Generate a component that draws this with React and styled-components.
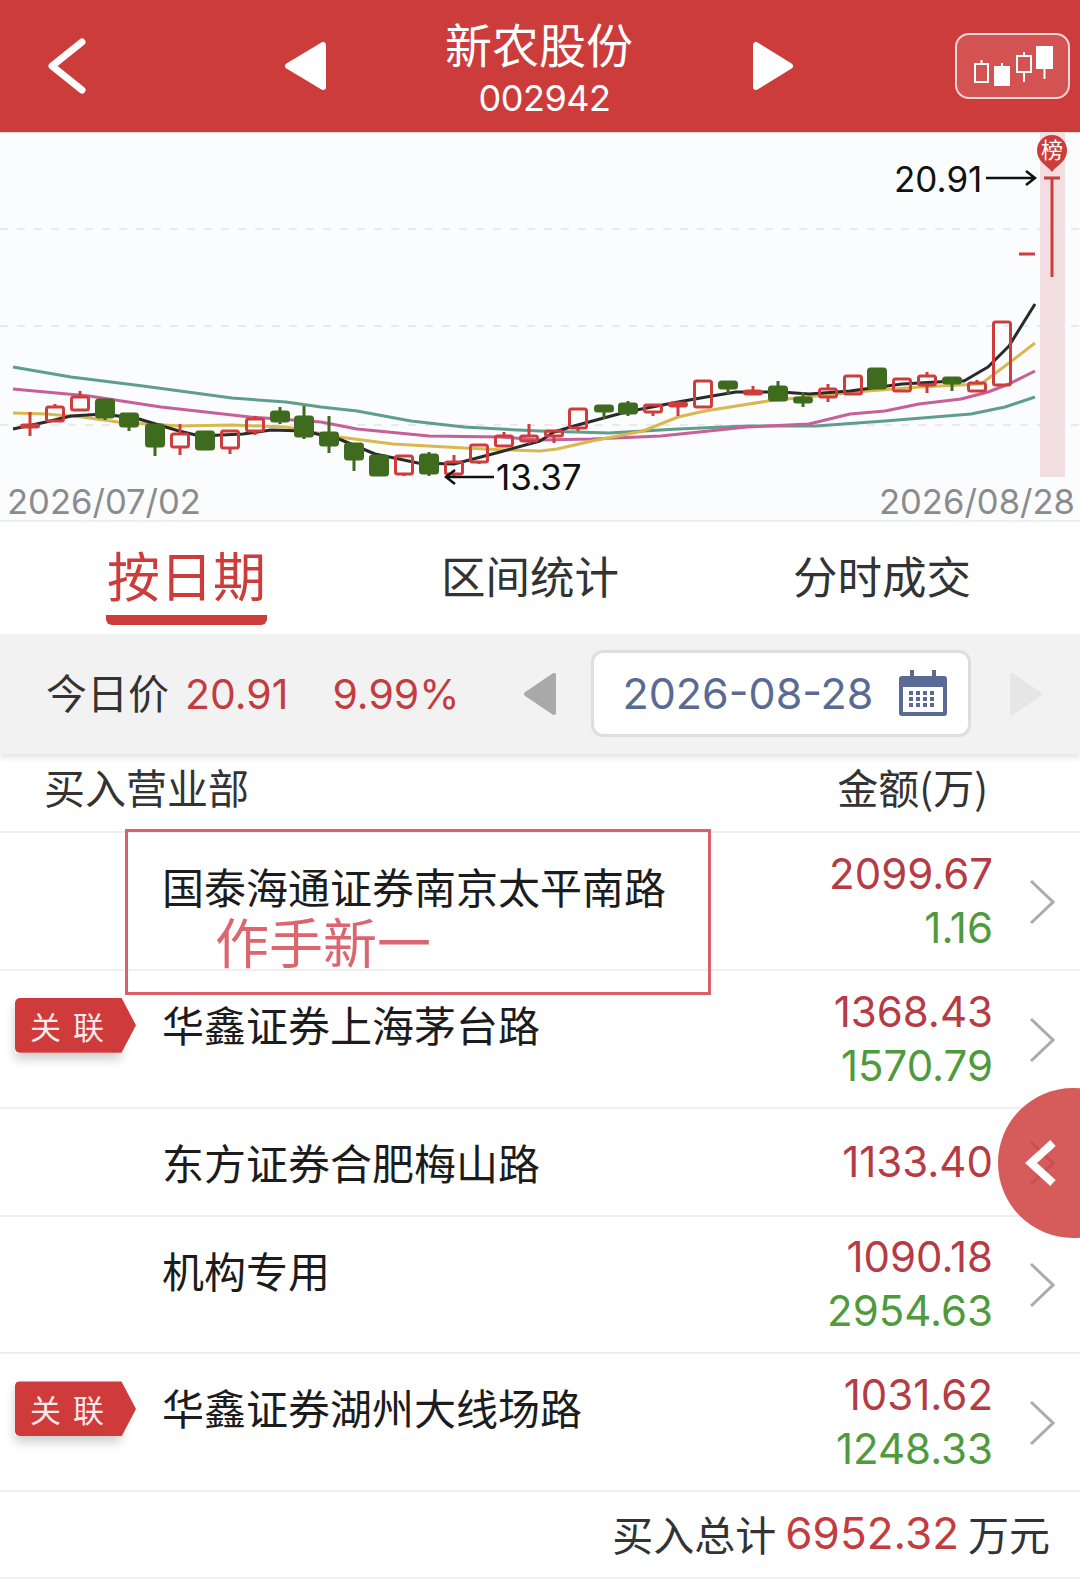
import React from "react";
import styled, { createGlobalStyle } from "styled-components";

const Global = createGlobalStyle`
  html, body { margin: 0; padding: 0; background: #fff; }
  body { font-family: Inter, "Noto Sans CJK SC", sans-serif; }
`;

const Page = styled.div`
  position: relative;
  width: 1080px;
  height: 1580px;
  overflow: hidden;
  background: #fff;
`;

const Header = styled.header`
  display: grid;
  grid-template-columns: 236px 43px 425px 42px 161px 115px;
  align-items: center;
  height: 132px;
  padding-left: 48px;
  background: #cc3c3a;
  color: #fff;
`;

const TitleCol = styled.div`
  display: flex;
  flex-direction: column;
  align-items: center;
`;

const Title = styled.div`
  font-family: "Noto Sans CJK SC", sans-serif;
  font-size: 47px;
  line-height: 58px;
  margin-top: 0;
  margin-left: -1px;
`;

const Code = styled.div`
  font-size: 36px;
  line-height: 40px;
  margin-top: 6px;
  margin-left: 10px;
  letter-spacing: -0.5px;
`;

const KlineBtn = styled.div`
  box-sizing: border-box;
  width: 115px;
  height: 66px;
  border: 2px solid #f3d6d5;
  border-radius: 14px;
  background: rgba(255, 255, 255, 0.12);
`;

const Chart = styled.section`
  height: 390px;
  box-sizing: border-box;
  background: #fbfcfe;
  border-top: 1px solid #f3d9d8;
  border-bottom: 2px solid #efefef;
`;

const ChartSvg = styled.svg`
  display: block;
  width: 1080px;
  height: 344px;
  overflow: visible;
`;

const Dates = styled.div`
  display: flex;
  justify-content: space-between;
  padding: 2px 5px 0 7px;
  font-size: 34.6px;
  line-height: 44px;
  color: #8b8b8d;
`;

const Tabs = styled.nav`
  display: flex;
  gap: 174px;
  height: 112px;
  box-sizing: border-box;
  padding-left: 106px;
  font-family: "Noto Sans CJK SC", sans-serif;
`;

const Tab = styled.div`
  height: 103px;
  box-sizing: border-box;
  padding: ${(p) => (p.$active ? "20px 1px 0" : "21px 0 0")};
  font-size: ${(p) => (p.$active ? "53px" : "44.5px")};
  line-height: 64px;
  color: ${(p) => (p.$active ? "#cc3c3a" : "#333")};
  border-bottom: ${(p) => (p.$active ? "10px solid #cc3c3a" : "none")};
  border-radius: 0 0 6px 6px;
`;

const PriceBar = styled.div`
  position: relative;
  display: flex;
  align-items: center;
  height: 120px;
  box-sizing: border-box;
  padding-left: 46px;
  background: #f2f2f2;
  box-shadow: 0 4px 6px rgba(0, 0, 0, 0.1);
`;

const PriceLabel = styled.span`
  font-family: "Noto Sans CJK SC", sans-serif;
  font-size: 41px;
  color: #333;
  margin-top: -6px;
`;

const PriceNum = styled.span`
  font-size: 41px;
  color: #c33c40;
  margin-left: ${(p) => p.$gap}px;
`;

const Arrow = styled.svg`
  display: block;
  flex: none;
  margin-left: ${(p) => p.$gap}px;
`;

const DateBox = styled.div`
  display: flex;
  align-items: center;
  gap: 26px;
  box-sizing: border-box;
  width: 380px;
  height: 87px;
  margin: -2px 0 0 35px;
  padding-left: 29px;
  background: #fff;
  border: 3px solid #dedede;
  border-radius: 12px;
  font-size: 43px;
  color: #5a6a94;
`;

const ListHead = styled.div`
  display: flex;
  justify-content: space-between;
  align-items: center;
  height: 79px;
  box-sizing: border-box;
  padding: 0 92px 14px 44px;
  border-bottom: 2px solid #efefef;
  font-family: "Noto Sans CJK SC", sans-serif;
  font-size: 41px;
  color: #333;
`;

const Row = styled.div`
  position: relative;
  display: flex;
  align-items: center;
  height: ${(p) => (p.$short ? 108 : 137.8)}px;
  box-sizing: border-box;
  padding-left: 162px;
  border-bottom: 2px solid #efefef;
`;

const Name = styled.div`
  flex: 1;
  align-self: flex-start;
  padding-top: 26px;
  font-family: "Noto Sans CJK SC", sans-serif;
  font-size: 42px;
  line-height: 54px;
  color: #1c1c1c;
`;

const Values = styled.div`
  display: flex;
  flex-direction: column;
  align-items: flex-end;
  font-size: 42px;
  line-height: 54px;
`;

const Value = styled.div`
  color: ${(p) => (p.$green ? "#4f9a3c" : "#b53b44")};
`;

const ChevronSlot = styled.div`
  width: 87px;
  display: flex;
  justify-content: flex-end;
  padding-right: 25px;
  margin-top: 2px;
  box-sizing: border-box;
`;

const Tag = styled.div`
  position: absolute;
  left: 15px;
  top: 27px;
  display: flex;
  align-items: center;
  gap: 12px;
  box-sizing: border-box;
  width: 121px;
  height: 55px;
  padding-left: 15px;
  font-family: "Noto Sans CJK SC", sans-serif;
  font-size: 31px;
  color: #fbeaea;
  background: #cf3b3a;
  border-radius: 5px 0 0 5px;
  clip-path: polygon(0 0, 88% 0, 100% 50%, 88% 100%, 0 100%, 0 0);
`;

const TagShadow = styled.div`
  position: absolute;
  left: 15px;
  top: 27px;
  width: 106px;
  height: 55px;
  box-shadow: 0 6px 10px rgba(0, 0, 0, 0.2);
`;

const Footer = styled.div`
  display: flex;
  justify-content: flex-end;
  align-items: center;
  height: 87px;
  box-sizing: border-box;
  padding: 0 30px 3px 0;
  border-bottom: 2px solid #efefef;
  font-family: "Noto Sans CJK SC", sans-serif;
  font-size: 41px;
  color: #333;
`;

const Total = styled.span`
  font-family: Inter, sans-serif;
  font-size: 44px;
  color: #c33c40;
  margin: 0 9px;
`;

const NoteBox = styled.div`
  position: absolute;
  left: 125px;
  top: 829px;
  width: 586px;
  height: 166px;
  box-sizing: border-box;
  padding: 81px 0 0 87px;
  border: 3px solid #d9626a;
  font-family: "Noto Sans CJK SC", sans-serif;
  font-size: 54px;
  line-height: 56px;
  color: #dc6670;
`;

const Floater = styled.div`
  position: absolute;
  left: 998px;
  top: 1088px;
  width: 150px;
  height: 150px;
  border-radius: 50%;
  background: rgba(207, 62, 62, 0.85);
`;

const candles = [
  [30, 426, 428, 413, 437, 1], [55, 408, 422, 405, 423, 1], [80, 398, 411, 392, 411, 1],
  [105, 401, 418, 400, 421, 0], [129, 415, 427, 415, 432, 0], [155, 426, 447, 426, 457, 0],
  [180, 435, 448, 425, 456, 1], [205, 433, 450, 432, 450, 0], [230, 432, 449, 432, 455, 1],
  [255, 420, 432, 417, 436, 1], [280, 413, 422, 408, 425, 0], [304, 418, 437, 407, 440, 0],
  [329, 434, 446, 417, 454, 0], [354, 445, 460, 445, 472, 0], [379, 457, 476, 457, 477, 0],
  [404, 457, 475, 457, 477, 1], [429, 456, 474, 453, 477, 0], [454, 463, 475, 456, 477, 1],
  [479, 446, 463, 445, 465, 1], [504, 437, 447, 433, 447, 1], [529, 437, 442, 425, 445, 1],
  [554, 432, 437, 432, 444, 1], [578, 410, 429, 409, 432, 1], [604, 407, 412, 407, 420, 0],
  [628, 405, 414, 402, 417, 0], [653, 406, 413, 405, 417, 1], [678, 404, 407, 404, 417, 1],
  [703, 382, 408, 382, 409, 1], [728, 383, 389, 383, 395, 0], [753, 392, 395, 387, 395, 1],
  [778, 388, 401, 382, 402, 0], [803, 399, 403, 393, 408, 0], [828, 390, 398, 385, 403, 1],
  [853, 377, 395, 377, 396, 1], [877, 370, 389, 370, 389, 0], [902, 380, 392, 380, 393, 1],
  [927, 377, 386, 373, 394, 1], [952, 379, 384, 379, 392, 0], [977, 384, 392, 381, 392, 1],
  [1002, 323, 386, 323, 386, 1],
];

const lines = [
  ["#5f9e8c", "13,368 71,378 143,387 232,399 286,403 321,408 357,412 411,422 464,428 518,431 540,432 609,434 678,430 747,427 816,427 885,422 971,415 1005,408 1035,398"],
  ["#c75f98", "13,390 89,397 161,408 250,418 321,423 357,430 429,437 500,438 540,441 592,440 661,437 747,428 809,425 850,415 885,412 919,405 961,400 988,393 1009,385 1035,372"],
  ["#d9b84e", "13,414 46,415 82,418 118,423 179,427 232,426 286,428 339,438 393,445 464,449 507,451 540,452 557,450 592,442 643,432 678,418 705,412 768,402 816,397 868,392 919,388 981,385 1005,367 1035,344"],
  ["#2a2a2a", "13,430 46,423 71,417 104,415 139,420 179,432 200,437 243,435 271,431 304,432 339,440 375,455 418,464 454,465 500,453 540,442 554,433 574,427 626,413 678,403 712,397 736,393 781,393 809,395 850,392 902,385 954,382 964,382 988,368 1009,347 1035,305"],
];

const RED = "#cf3c3c";
const GREEN = "#3f6b1f";

const Candle = ({ c }) => {
  const [x, top, bottom, wickTop, wickBottom, up] = c;
  const color = up ? RED : GREEN;
  return (
    <g stroke={color} strokeWidth="3">
      <line x1={x} x2={x} y1={wickTop} y2={top} />
      <line x1={x} x2={x} y1={bottom} y2={wickBottom} />
      <rect x={x - 8.5} y={top} width="17" height={bottom - top} rx="2" fill={up ? "none" : color} />
    </g>
  );
};

const KChart = () => (
  <ChartSvg viewBox="0 134 1080 344">
    <rect x="1040" y="134" width="25" height="344" fill="#f3dfe1" />
    {[230, 327, 426].map((y) => (
      <line key={y} x1="0" x2="1080" y1={y} y2={y} stroke="#e3e3e3" strokeWidth="1.5" strokeDasharray="8 9" />
    ))}
    {lines.map(([color, pts]) => (
      <polyline key={color} points={pts} fill="none" stroke={color} strokeWidth="3" strokeLinejoin="round" />
    ))}
    {candles.map((c) => (
      <Candle key={c[0]} c={c} />
    ))}
    <line x1="1019" x2="1035" y1="255" y2="255" stroke={RED} strokeWidth="3" />
    <path d="M1044 179H1060M1052 179V278" fill="none" stroke={RED} strokeWidth="3" />
    <path d="M1052 173C1048 167 1037 163 1037 151A15 15 0 0 1 1067 151C1067 163 1056 167 1052 173Z" fill="#cc3c3a" />
    <text x="1052" y="159" textAnchor="middle" fontSize="22" fill="#fff" fontFamily="'Noto Sans CJK SC', sans-serif">榜</text>
    <text x="894" y="193" fontSize="35" fill="#111" fontFamily="Inter, sans-serif">20.91</text>
    <path d="M986 179H1035M1026 172L1035 179L1026 186" fill="none" stroke="#111" strokeWidth="2.5" />
    <text x="496" y="491" fontSize="35" fill="#111" fontFamily="Inter, sans-serif">13.37</text>
    <path d="M494 478H446M455 471L446 478L455 485" fill="none" stroke="#111" strokeWidth="2.5" />
  </ChartSvg>
);

const KlineIcon = () => (
  <svg width="111" height="62" viewBox="957 34 111 62" fill="none" stroke="#fff" strokeWidth="2">
    <rect x="975" y="63" width="13" height="18" />
    <path d="M981.5 59V63" />
    <rect x="995" y="66" width="14" height="18" fill="#fff" />
    <path d="M1002 62V66" />
    <rect x="1017" y="55" width="14" height="16" />
    <path d="M1024 51V55M1024 71V81" />
    <rect x="1037" y="46" width="15" height="21" fill="#fff" />
    <path d="M1044.5 67V78" />
  </svg>
);

const CalendarIcon = () => (
  <svg width="48" height="46" viewBox="0 0 48 46">
    <rect x="0" y="6" width="48" height="40" rx="3" fill="#5a6a94" />
    <rect x="4" y="17" width="40" height="25" fill="#fff" />
    <rect x="11" y="0" width="4" height="13" fill="#5a6a94" />
    <rect x="33" y="0" width="4" height="13" fill="#5a6a94" />
    {[21, 27, 33].map((y) =>
      [10, 17, 24, 31].map((x) => <rect key={`${x}-${y}`} x={x} y={y} width="4" height="4" fill="#5a6a94" />)
    )}
  </svg>
);

const Chevron = () => (
  <svg width="26" height="46" viewBox="0 0 26 46" fill="none" stroke="#ababab" strokeWidth="3">
    <path d="M2 2L24 23L2 44" />
  </svg>
);

const LeftTriangle = ({ color, gap }) => (
  <Arrow $gap={gap} width="32" height="42" viewBox="0 0 32 42" fill={color} stroke={color} strokeWidth="4" strokeLinejoin="round">
    <path d="M30 2V40L2 21Z" />
  </Arrow>
);

const RightTriangle = ({ color, gap }) => (
  <Arrow $gap={gap} width="32" height="42" viewBox="0 0 32 42" fill={color} stroke={color} strokeWidth="4" strokeLinejoin="round">
    <path d="M2 2V40L30 21Z" />
  </Arrow>
);

const rows = [
  { name: "国泰海通证券南京太平南路", buy: "2099.67", sell: "1.16" },
  { name: "华鑫证券上海茅台路", buy: "1368.43", sell: "1570.79", tag: true },
  { name: "东方证券合肥梅山路", buy: "1133.40", short: true },
  { name: "机构专用", buy: "1090.18", sell: "2954.63" },
  { name: "华鑫证券湖州大线场路", buy: "1031.62", sell: "1248.33", tag: true },
];

export default function App() {
  return (
    <Page>
      <Global />
      <Header>
        <svg width="38" height="56" viewBox="0 0 38 56" fill="none" stroke="#fff" strokeWidth="7" strokeLinecap="round" strokeLinejoin="round">
          <path d="M34 4L4 28L34 52" />
        </svg>
        <svg width="43" height="50" viewBox="0 0 43 50" fill="#fff" stroke="#fff" strokeWidth="6" strokeLinejoin="round">
          <path d="M39 4V46L4 25Z" />
        </svg>
        <TitleCol>
          <Title>新农股份</Title>
          <Code>002942</Code>
        </TitleCol>
        <svg width="42" height="50" viewBox="0 0 42 50" fill="#fff" stroke="#fff" strokeWidth="6" strokeLinejoin="round">
          <path d="M4 4V46L38 25Z" />
        </svg>
        <span />
        <KlineBtn>
          <KlineIcon />
        </KlineBtn>
      </Header>

      <Chart>
        <KChart />
        <Dates>
          <span>2026/07/02</span>
          <span>2026/08/28</span>
        </Dates>
      </Chart>

      <Tabs>
        <Tab $active>按日期</Tab>
        <Tab>区间统计</Tab>
        <Tab>分时成交</Tab>
      </Tabs>

      <PriceBar>
        <PriceLabel>今日价</PriceLabel>
        <PriceNum $gap={16}>20.91</PriceNum>
        <PriceNum $gap={44}>9.99%</PriceNum>
        <LeftTriangle color="#a9a9a9" gap={64} />
        <DateBox>
          2026-08-28
          <CalendarIcon />
        </DateBox>
        <RightTriangle color="#e6e6e6" gap={39} />
      </PriceBar>

      <ListHead>
        <span>买入营业部</span>
        <span>金额(万)</span>
      </ListHead>

      {rows.map((r) => (
        <Row key={r.name} $short={r.short}>
          {r.tag && (
            <>
              <TagShadow />
              <Tag>
                <span>关</span>
                <span>联</span>
              </Tag>
            </>
          )}
          <Name>{r.name}</Name>
          <Values>
            <Value>{r.buy}</Value>
            {r.sell && <Value $green>{r.sell}</Value>}
          </Values>
          <ChevronSlot>
            <Chevron />
          </ChevronSlot>
        </Row>
      ))}

      <Footer>
        买入总计<Total>6952.32</Total>万元
      </Footer>

      <NoteBox>作手新一</NoteBox>
      <Floater>
        <svg width="82" height="150" viewBox="0 0 82 150" fill="none" stroke="#fff" strokeWidth="8">
          <path d="M55 55L33 75L55 95" />
        </svg>
      </Floater>
    </Page>
  );
}
